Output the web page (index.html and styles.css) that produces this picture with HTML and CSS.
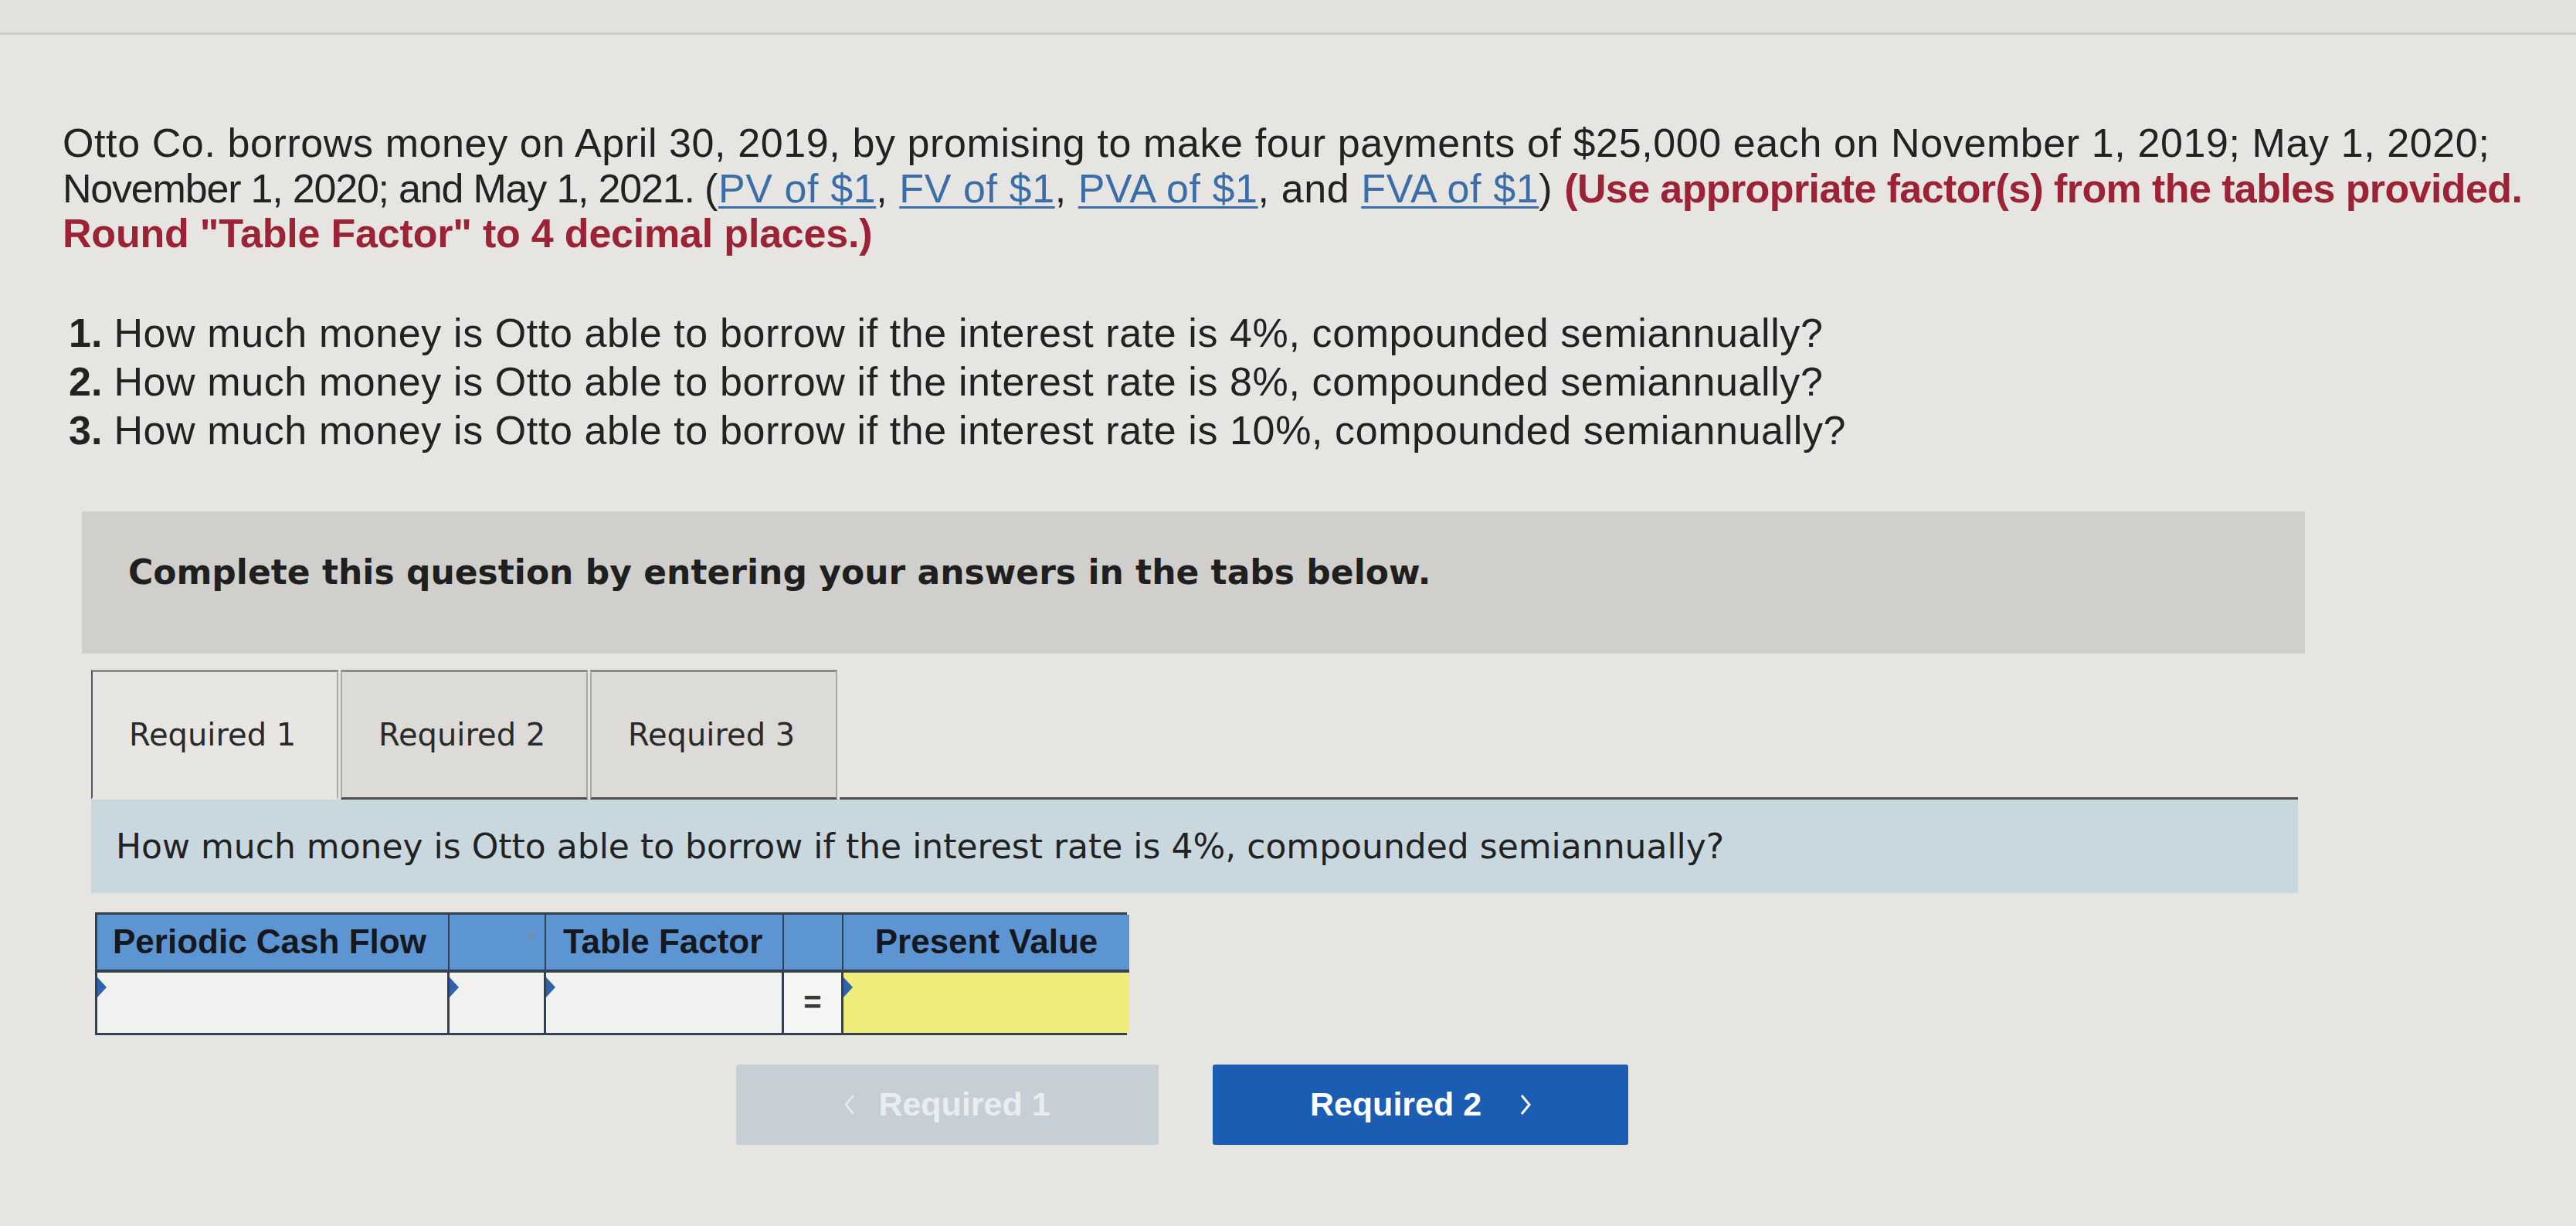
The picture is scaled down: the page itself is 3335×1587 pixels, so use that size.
FILE: index.html
```html
<!DOCTYPE html>
<html lang="en">
<head>
<meta charset="utf-8">
<title>Otto Co. borrowing question</title>
<link rel="stylesheet" href="styles.css">
</head>
<body>
<div class="topband"></div>
<main class="page">
  <p class="intro">Otto Co. borrows money on April 30, 2019, by promising to make four payments of $25,000 each on November 1, 2019; May 1, 2020;<br><span class="tight">November 1, 2020; and May 1, 2021. </span>(<a href="#">PV of $1</a>, <a href="#">FV of $1</a>, <a href="#">PVA of $1</a>, and <a href="#">FVA of $1</a>) <strong class="warn">(Use appropriate factor(s) from the tables provided.<br><span class="wide">Round "Table Factor" to 4 decimal places.)</span></strong></p>

  <ol class="questions">
    <li><b>1.</b> How much money is Otto able to borrow if the interest rate is 4%, compounded semiannually?</li>
    <li><b>2.</b> How much money is Otto able to borrow if the interest rate is 8%, compounded semiannually?</li>
    <li><b>3.</b> How much money is Otto able to borrow if the interest rate is 10%, compounded semiannually?</li>
  </ol>

  <div class="notice">Complete this question by entering your answers in the tabs below.</div>

  <section class="tabset">
    <div class="tabs">
      <div class="tab active">Required 1</div>
      <div class="tab">Required 2</div>
      <div class="tab">Required 3</div>
      <div class="tab-rest"></div>
    </div>
    <div class="prompt">How much money is Otto able to borrow if the interest rate is 4%, compounded semiannually?</div>
  </section>

  <div class="calc">
    <div class="hd c1">Periodic Cash Flow</div>
    <div class="hd c2"><span class="tick"></span></div>
    <div class="hd c3">Table Factor</div>
    <div class="hd c4"></div>
    <div class="hd c5">Present Value</div>
    <div class="cell inp"></div>
    <div class="cell inp"></div>
    <div class="cell inp"></div>
    <div class="cell eq">=</div>
    <div class="cell inp yellow"></div>
  </div>

  <div class="navs">
    <button class="nav prev"><svg class="chev" viewBox="0 0 14 28" width="14" height="28"><polyline points="12,2 2,14 12,26" fill="none" stroke="currentColor" stroke-width="2.5"/></svg><span>Required 1</span></button>
    <button class="nav next"><span>Required 2</span><svg class="chev" viewBox="0 0 14 28" width="14" height="28"><polyline points="2,2 12,14 2,26" fill="none" stroke="currentColor" stroke-width="3"/></svg></button>
  </div>
</main>
</body>
</html>
```
FILE: styles.css
```css
html, body {
  margin: 0;
  padding: 0;
}
body {
  background: #e6e5e1;
  color: #2a2a2a;
  width: 3335px;
  height: 1587px;
  overflow: hidden;
}
.topband {
  height: 42px;
  background: #e3e2df;
  border-bottom: 3px solid #cdccc8;
}
.page {
  padding-left: 81px;
}
.intro {
  margin: 111px 0 0 0;
  font-family: "Liberation Sans", Arial, sans-serif;
  font-size: 52px;
  letter-spacing: 0.6px;
  line-height: 58.5px;
  white-space: nowrap;
  color: #222222;
}
.intro .tight {
  letter-spacing: -1.2px;
}
.intro a {
  color: #3b6ea8;
  text-decoration: underline;
  text-underline-offset: 5px;
  text-decoration-thickness: 3px;
}
.warn {
  color: #9c2236;
  font-weight: 700;
  letter-spacing: -0.6px;
}
.warn .wide {
  letter-spacing: -0.2px;
}
.questions {
  list-style: none;
  margin: 68px 0 0 8px;
  padding: 0;
  font-family: "Liberation Sans", Arial, sans-serif;
  font-size: 52px;
  letter-spacing: 0.6px;
  line-height: 63px;
  white-space: nowrap;
  color: #222222;
}
.questions b {
  font-weight: 700;
  letter-spacing: 0;
}
.notice {
  margin: 73px 0 0 25px;
  width: 2878px;
  height: 184px;
  box-sizing: border-box;
  padding: 54px 0 0 60px;
  background: #d0cfcc;
  font-family: "DejaVu Sans", Verdana, sans-serif;
  font-weight: 700;
  font-size: 44px;
  line-height: 50px;
  color: #1f1f1f;
}
.tabset {
  margin: 21px 0 0 37px;
  width: 2857px;
}
.tabs {
  display: flex;
  align-items: flex-end;
  height: 168px;
}
.tab {
  width: 320px;
  height: 168px;
  box-sizing: border-box;
  display: flex;
  align-items: center;
  padding-left: 47px;
  margin-right: 3px;
  border: 2px solid #a9a8a5;
  border-top: 3px solid #8c8b88;
  border-bottom: 3px solid #4d4d4d;
  background: #dcdbd8;
  font-family: "DejaVu Sans", Verdana, sans-serif;
  font-size: 40px;
  color: #2a2a2a;
}
.tab.active {
  background: #e7e6e3;
  border-bottom: 3px solid #e7e6e3;
  border-left: 2px solid #555;
}
.tab-rest {
  flex: 1;
  height: 0;
  border-bottom: 3px solid #4d4d4d;
}
.prompt {
  height: 121px;
  box-sizing: border-box;
  padding: 0 0 0 32px;
  display: flex;
  align-items: center;
  background: #c9d7df;
  font-family: "DejaVu Sans", Verdana, sans-serif;
  font-size: 44px;
  color: #222222;
}
.calc {
  margin: 25px 0 0 42px;
  display: grid;
  grid-template-columns: 456px 125px 308px 77px 370px;
  grid-template-rows: 75px 78px;
  width: 1336px;
  border: 3px solid #34404f;
  box-sizing: border-box;
  background: #34404f;
  font-family: "Liberation Sans", Arial, sans-serif;
}
.hd {
  background: #5d94d2;
  font-weight: 700;
  font-size: 44px;
  color: #15181d;
  display: flex;
  align-items: center;
  border-right: 2px solid #34404f;
  border-bottom: 4px solid #34404f;
  position: relative;
}
.hd.c1 { padding-left: 20px; }
.hd.c3 { padding-left: 22px; }
.hd.c5 { justify-content: center; border-right: 0; }
.tick {
  position: absolute;
  right: 16px;
  top: 24px;
  width: 5px;
  height: 7px;
  background: #7d8a99;
  border-radius: 2px;
}
.cell {
  background: #f1f1ef;
  border-right: 3px solid #34404f;
  position: relative;
}
.cell.yellow {
  background: #efed7a;
  border-right: 0;
}
.cell.inp::before {
  content: "";
  position: absolute;
  left: 0;
  top: 6px;
  border-top: 13px solid transparent;
  border-bottom: 13px solid transparent;
  border-left: 12px solid #2f62ac;
}
.cell.eq {
  display: flex;
  align-items: center;
  justify-content: center;
  font-size: 40px;
  font-weight: 700;
  color: #3a3a3a;
  background: #f5f5f3;
}
.navs {
  display: flex;
  gap: 70px;
  margin: 38px 0 0 872px;
}
.nav {
  height: 104px;
  border: 0;
  border-radius: 3px;
  display: flex;
  align-items: center;
  justify-content: center;
  gap: 30px;
  font-family: "Liberation Sans", Arial, sans-serif;
  font-weight: 700;
  font-size: 43px;
  padding: 0;
}
.nav.prev {
  width: 547px;
  background: #c6cfd6;
  color: #e9edf0;
}
.nav.next {
  width: 538px;
  background: #1b5db3;
  color: #ffffff;
  gap: 50px;
}
.chev {
  display: block;
}
```
